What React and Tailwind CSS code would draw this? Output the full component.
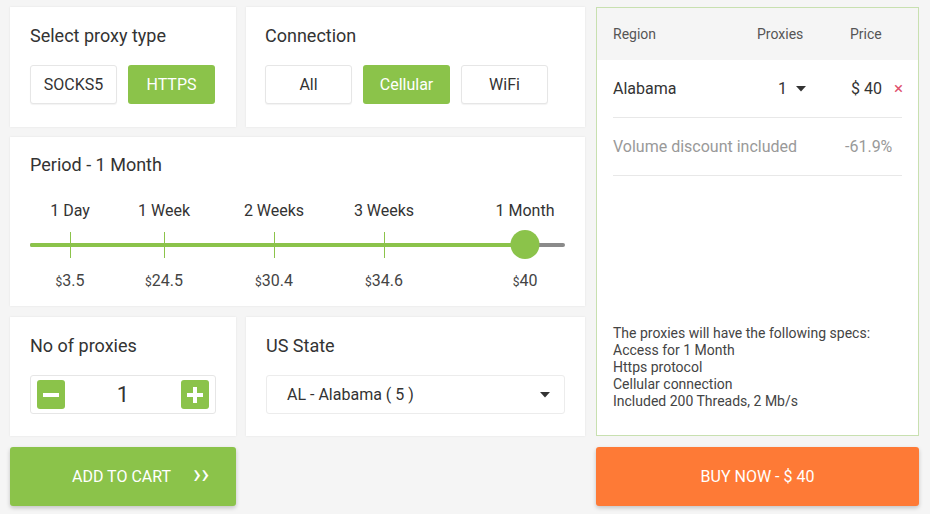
import React, { useState } from 'react';

const font = { fontFamily: 'Roboto, "Liberation Sans", sans-serif' };

const periods = [
  { label: '1 Day', price: '3.5', pos: 40 },
  { label: '1 Week', price: '24.5', pos: 134 },
  { label: '2 Weeks', price: '30.4', pos: 244 },
  { label: '3 Weeks', price: '34.6', pos: 354 },
  { label: '1 Month', price: '40', pos: 495 },
];

const Card = ({ className = '', children }) => (
  <div className={`bg-white shadow-[0_0_2px_rgba(0,0,0,0.08)] ${className}`}>{children}</div>
);

const Option = ({ active, children, onClick }) => (
  <button
    onClick={onClick}
    className={`h-[39px] w-[87px] rounded-[3px] text-[16px] ${
      active
        ? 'bg-[#8bc34a] text-white'
        : 'bg-white text-[#333] border border-[#e6e6e6] shadow-[0_1px_1px_rgba(0,0,0,0.05)]'
    }`}
  >
    {children}
  </button>
);

const Caret = () => (
  <svg width="10" height="6" viewBox="0 0 10 6" className="fill-[#333]">
    <path d="M0 0h10L5 5.5z" />
  </svg>
);

export default function App() {
  const [type, setType] = useState('HTTPS');
  const [conn, setConn] = useState('Cellular');
  const [qty, setQty] = useState(1);

  return (
    <div style={font} className="w-[930px] h-[514px] bg-[#f5f5f5] pl-[10px] pt-[7px] flex gap-[11px] text-[#333]">
      <div className="w-[575px] flex flex-col">
        <div className="flex gap-[10px]">
          <Card className="w-[226px] h-[120px] px-[20px] pt-[18px]">
            <h2 className="text-[18px] leading-[22px] font-normal">Select proxy type</h2>
            <div className="flex gap-[11px] mt-[18px]">
              {['SOCKS5', 'HTTPS'].map((t) => (
                <Option key={t} active={type === t} onClick={() => setType(t)}>{t}</Option>
              ))}
            </div>
          </Card>
          <Card className="w-[339px] h-[120px] px-[19px] pt-[18px]">
            <h2 className="text-[18px] leading-[22px] font-normal">Connection</h2>
            <div className="flex gap-[11px] mt-[18px]">
              {['All', 'Cellular', 'WiFi'].map((t) => (
                <Option key={t} active={conn === t} onClick={() => setConn(t)}>{t}</Option>
              ))}
            </div>
          </Card>
        </div>

        <Card className="mt-[10px] h-[169px] px-[20px] pt-[17px]">
          <h2 className="text-[18px] leading-[22px] font-normal">Period - 1 Month</h2>
          <div className="relative h-[110px] mt-[25px]">
            {periods.map((p) => (
              <div
                key={p.label}
                className="absolute top-0 -translate-x-1/2 text-[16px] leading-[20px] whitespace-nowrap"
                style={{ left: p.pos }}
              >
                {p.label}
              </div>
            ))}
            <div className="absolute left-0 right-0 top-[42px] h-[4px] bg-[#8a8a8a] rounded-full" />
            <div className="absolute left-0 top-[42px] h-[4px] bg-[#8bc34a] rounded-l-full" style={{ width: 495 }} />
            {periods.slice(0, 4).map((p) => (
              <div key={p.price} className="absolute top-[31px] w-px h-[26px] bg-[#8bc34a]" style={{ left: p.pos }} />
            ))}
            <div className="absolute top-[29px] w-[29px] h-[29px] rounded-full bg-[#8bc34a] -translate-x-1/2" style={{ left: 495 }} />
            {periods.map((p) => (
              <div
                key={p.price}
                className="absolute top-[70px] -translate-x-1/2 text-[16px] leading-[20px] text-[#444] whitespace-nowrap"
                style={{ left: p.pos }}
              >
                <span className="text-[12px]">$</span>{p.price}
              </div>
            ))}
          </div>
        </Card>

        <div className="flex gap-[10px] mt-[11px]">
          <Card className="w-[226px] h-[119px] px-[20px] pt-[18px]">
            <h2 className="text-[18px] leading-[22px] font-normal">No of proxies</h2>
            <div className="mt-[18px] h-[39px] border border-[#e6e6e6] rounded-[3px] flex items-center justify-between px-[6px]">
              <button onClick={() => setQty(Math.max(1, qty - 1))} className="w-[28px] h-[29px] rounded-[3px] bg-[#8bc34a] flex items-center justify-center">
                <span className="block w-[16px] h-[4px] bg-white" />
              </button>
              <span className="text-[22px] leading-none text-[#333]">{qty}</span>
              <button onClick={() => setQty(qty + 1)} className="w-[28px] h-[29px] rounded-[3px] bg-[#8bc34a] flex items-center justify-center relative">
                <span className="block w-[16px] h-[4px] bg-white" />
                <span className="absolute w-[4px] h-[16px] bg-white" />
              </button>
            </div>
          </Card>
          <Card className="w-[339px] h-[119px] px-[20px] pt-[18px]">
            <h2 className="text-[18px] leading-[22px] font-normal">US State</h2>
            <div className="mt-[18px] h-[39px] border border-[#ececec] rounded-[3px] flex items-center justify-between pl-[20px] pr-[14px]">
              <span className="text-[16px]">AL - Alabama ( 5 )</span>
              <Caret />
            </div>
          </Card>
        </div>

        <button className="mt-[11px] w-[226px] h-[59px] rounded-[3px] bg-[#8bc34a] text-white text-[16px] flex items-center shadow-[0_2px_4px_rgba(0,0,0,0.2)]">
          <span className="ml-[62px]">ADD TO CART</span>
          <span className="ml-[22px] text-[27px] leading-none -mt-[5px]">››</span>
        </button>
      </div>

      <div className="w-[323px] flex flex-col">
        <div className="h-[429px] border border-[#c8e0b0] bg-white flex flex-col">
          <div className="h-[52px] bg-[#f5f5f5] flex items-center text-[14px] text-[#555] pl-[16px] whitespace-nowrap">
            <span className="w-[144px]">Region</span>
            <span className="w-[93px]">Proxies</span>
            <span>Price</span>
          </div>
          <div className="px-[16px]">
            <div className="h-[58px] flex items-center text-[16px] border-b border-[#e8e8e8] whitespace-nowrap">
              <span className="w-[165px] shrink-0">Alabama</span>
              <span className="flex items-center gap-[9px] shrink-0">1 <Caret /></span>
              <span className="ml-[45px] shrink-0">$ 40</span>
              <span className="ml-[12px] text-[#e0506e] text-[17px] leading-none shrink-0">×</span>
            </div>
            <div className="h-[58px] flex items-center text-[16px] text-[#999] border-b border-[#e8e8e8] whitespace-nowrap">
              <span className="w-[232px]">Volume discount included</span>
              <span>-61.9%</span>
            </div>
          </div>
          <div className="mt-auto px-[16px] pb-[25px] text-[14px] leading-[17px] text-[#444]">
            <p>The proxies will have the following specs:</p>
            <p>Access for 1 Month</p>
            <p>Https protocol</p>
            <p>Cellular connection</p>
            <p>Included 200 Threads, 2 Mb/s</p>
          </div>
        </div>
        <button className="mt-[11px] h-[59px] rounded-[3px] bg-[#fe7a36] text-white text-[16px] shadow-[0_2px_4px_rgba(0,0,0,0.2)]">
          BUY NOW - $ 40
        </button>
      </div>
    </div>
  );
}
